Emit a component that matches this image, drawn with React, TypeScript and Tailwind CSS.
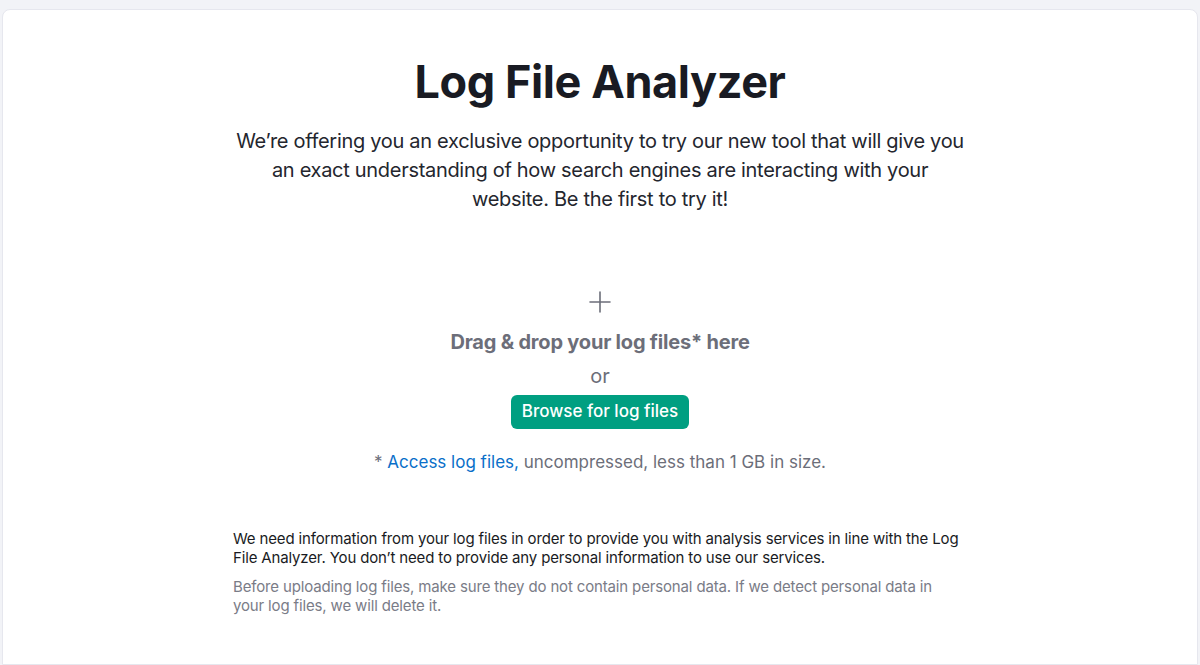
import React from 'react';

export default function App() {
  return (
    <div className="min-h-[665px] bg-[#f2f3f7] px-[2px] pt-[9px] font-['Inter',sans-serif]">
      <div className="min-h-[656px] rounded-t-[8px] border border-[#e6e7ee] bg-white">
        <div className="mx-auto flex w-[760px] flex-col items-center pt-[40px]">
          <h1 className="text-[45px] font-bold leading-[64px] tracking-[-0.4px] text-[#191b23]">
            Log File Analyzer
          </h1>
          <p className="mt-[13px] w-[732px] text-center text-[20px] leading-[29px] tracking-[-0.3px] text-[#24262e]">
            We’re offering you an exclusive opportunity to try our new tool that will give you
            an exact understanding of how search engines are interacting with your
            website. Be the first to try it!
          </p>

          {/* Drop zone */}
          <div className="mt-[77px] flex flex-col items-center">
            <svg width="22" height="22" viewBox="0 0 22 22" fill="none" stroke="#6c6e79" strokeWidth="1.6" strokeLinecap="round">
              <path d="M11 1v20M1 11h20" />
            </svg>
            <div className="mt-[15px] text-[20px] font-bold leading-[28px] tracking-[-0.2px] text-[#6c6e79]">
              Drag &amp; drop your log files* here
            </div>
            <div className="mt-[6px] text-[20px] leading-[28px] text-[#6c6e79]">or</div>
            <button className="mt-[5px] h-[34px] rounded-[6px] bg-[#009f81] px-[11px] text-[17px] font-medium text-white">
              Browse for log files
            </button>
            <div className="mt-[21px] text-[17px] leading-[24px] text-[#6c6e79]">
              * <span className="text-[#0a6fc9]">Access log files,</span> uncompressed, less than 1 GB in size.
            </div>
          </div>

          {/* Notes */}
          <div className="mt-[55px] w-[740px] pl-[3px] text-[15px] leading-[19px] tracking-[-0.15px]">
            <p className="w-[735px] text-[#191b23]">
              We need information from your log files in order to provide you with analysis services in line with the Log
              File Analyzer. You don’t need to provide any personal information to use our services.
            </p>
            <p className="mt-[10px] w-[715px] text-[#7a7c87]">
              Before uploading log files, make sure they do not contain personal data. If we detect personal data in
              your log files, we will delete it.
            </p>
          </div>
        </div>
      </div>
    </div>
  );
}
